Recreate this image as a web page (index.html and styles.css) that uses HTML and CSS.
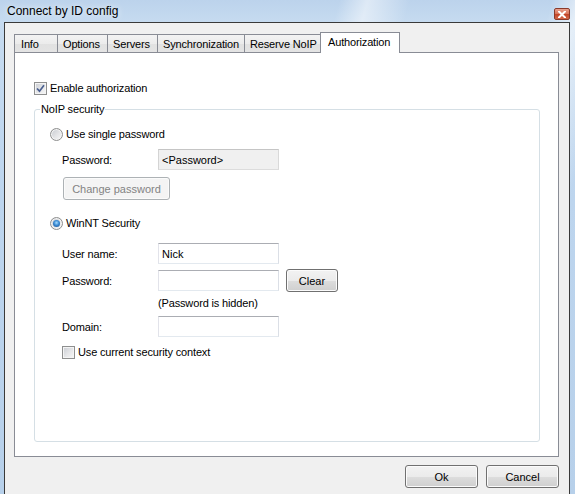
FILE: index.html
```html
<!DOCTYPE html>
<html>
<head>
<meta charset="utf-8">
<title>Connect by ID config</title>
<link rel="stylesheet" href="styles.css">
</head>
<body>
<div class="window">
  <div class="titlebar">
    <span class="title">Connect by ID config</span>
    <span class="close"><svg width="8" height="7" viewBox="0 0 8 7"><path d="M1 0.5 L7 6.5 M7 0.5 L1 6.5" stroke="#fff" stroke-width="2" stroke-linecap="square"/></svg></span>
  </div>
  <div class="client">
    <div class="tabs">
      <div class="tab t-info">Info</div>
      <div class="tab t-options">Options</div>
      <div class="tab t-servers">Servers</div>
      <div class="tab t-sync">Synchronization</div>
      <div class="tab t-reserve">Reserve NoIP</div>
      <div class="tab sel t-auth">Authorization</div>
    </div>
    <div class="panel">
      <div class="row13 enable">
        <span class="cb"><svg width="9" height="9" viewBox="0 0 9 9"><path d="M1 4.5 L3.5 7.2 L8 1.2" fill="none" stroke="#4a5f8f" stroke-width="1.7"/></svg></span>
        <span>Enable authorization</span>
      </div>
      <div class="group">
        <div class="group-title">NoIP security</div>
        <div class="group-body">
          <div class="row13 r1"><span class="radio"></span><span>Use single password</span></div>
          <div class="field pw1"><span class="lbl">Password:</span><input class="edit ro" value="&lt;Password&gt;" readonly></div>
          <div class="btnrow"><button class="btn change" disabled>Change password</button></div>
          <div class="row13 r2"><span class="radio"><span class="dot"></span></span><span>WinNT Security</span></div>
          <div class="field user"><span class="lbl">User name:</span><input class="edit" value="Nick"></div>
          <div class="field pw2"><span class="lbl">Password:</span><input class="edit" type="password" value=""><button class="btn clear">Clear</button></div>
          <div class="hint">(Password is hidden)</div>
          <div class="field domain"><span class="lbl">Domain:</span><input class="edit" value=""></div>
          <div class="row13 ctx"><span class="cb"></span><span>Use current security context</span></div>
        </div>
      </div>
    </div>
    <div class="footer">
      <button class="btn dlg">Ok</button>
      <button class="btn dlg">Cancel</button>
    </div>
  </div>
</div>
</body>
</html>
```

FILE: styles.css
```css
html, body {
  margin: 0;
  padding: 0;
}
body {
  width: 575px;
  height: 494px;
  overflow: hidden;
  font-family: "Liberation Sans", Arial, sans-serif;
  font-size: 11px;
  letter-spacing: -0.15px;
  color: #000;
}
.window {
  box-sizing: border-box;
  height: 494px;
  padding: 0 5px 0 4px;
  display: flex;
  flex-direction: column;
  background:
    linear-gradient(105deg, rgba(255,255,255,0) 48%, rgba(255,255,255,0.5) 52%, rgba(255,255,255,0) 58%, rgba(255,255,255,0) 78%, rgba(255,255,255,0.55) 82%, rgba(255,255,255,0) 88%),
    linear-gradient(to bottom, #bcd3ec 0px, #c6dbf0 22px, #bdd5ee 200px, #b7d0ea 494px);
}
.titlebar {
  height: 22px;
  flex: none;
  display: flex;
  justify-content: space-between;
  align-items: flex-start;
  padding-left: 3px;
}
.title {
  font-size: 12px;
  letter-spacing: 0;
  line-height: 22px;
  text-shadow: 0 0 6px rgba(255,255,255,0.9);
}
.close {
  margin-top: 8px;
  width: 16px;
  height: 12px;
  box-sizing: border-box;
  border: 1px solid #8a3a2a;
  border-radius: 2px;
  background: linear-gradient(to bottom, #e9a28f 0%, #d9775d 45%, #c4472a 55%, #d2684a 100%);
  display: flex;
  align-items: center;
  justify-content: center;
}
.client {
  flex: 1;
  border: 1px solid #3a3a3a;
  border-bottom: none;
  background: #f0f0f0;
  padding: 9px 10px 0 9px;
}
.tabs {
  display: flex;
  align-items: flex-end;
  height: 20px;
}
.tab {
  box-sizing: border-box;
  height: 18px;
  border: 1px solid #898c95;
  border-right: none;
  border-bottom: none;
  padding-left: 5px;
  line-height: 18px;
  white-space: nowrap;
  overflow: hidden;
  background: linear-gradient(to bottom, #f3f3f3 0%, #ececec 50%, #e1e1e1 51%, #e4e4e4 100%);
}
.t-info { width: 43px; padding-left: 6px; }
.t-options { width: 50px; }
.t-servers { width: 50px; }
.t-sync { width: 87px; }
.t-reserve { width: 76px; }
.tab.sel {
  width: 80px;
  height: 21px;
  margin-bottom: -1px;
  position: relative;
  z-index: 1;
  background: #fff;
  border-right: 1px solid #898c95;
  padding-left: 7px;
  line-height: 18px;
}
.panel {
  box-sizing: border-box;
  height: 405px;
  border: 1px solid #898c95;
  background: #fff;
  padding: 29px 18px 0 19px;
}
.row13 {
  display: flex;
  align-items: center;
  height: 13px;
  line-height: 13px;
}
.cb {
  box-sizing: border-box;
  width: 13px;
  height: 13px;
  flex: none;
  margin-right: 3px;
  border: 1px solid #8e8f8f;
  background: linear-gradient(135deg, #c9ccd2 0%, #e6e7e9 55%, #f7f7f7 100%);
  box-shadow: inset 0 0 0 1px #f4f4f4;
  display: flex;
  align-items: center;
  justify-content: center;
}
.radio {
  box-sizing: border-box;
  width: 13px;
  height: 13px;
  flex: none;
  margin-right: 3px;
  border: 1px solid #8e8f8f;
  border-radius: 50%;
  background: linear-gradient(135deg, #c5c9cf 0%, #e4e5e7 55%, #f8f8f8 100%);
  box-shadow: inset 0 0 0 1px #f4f4f4;
  display: flex;
  align-items: center;
  justify-content: center;
}
.dot {
  width: 7px;
  height: 7px;
  border-radius: 50%;
  background: radial-gradient(circle at 50% 40%, #a6dcff 0%, #3a8ad3 45%, #1c4f8e 100%);
}
.group {
  box-sizing: border-box;
  margin-top: 14px;
  height: 333px;
  border: 1px solid #d5dfe5;
  border-radius: 3px;
}
.group-title {
  margin: -7px 0 0 5px;
  padding: 0 1px;
  background: #fff;
  width: max-content;
  line-height: 13px;
}
.group-body {
  padding: 12px 0 0 15px;
}
.field {
  display: flex;
  align-items: center;
  margin-left: 12px;
}
.lbl {
  width: 96px;
  flex: none;
}
.edit {
  box-sizing: border-box;
  width: 121px;
  height: 21px;
  margin: 0;
  padding: 0 3px;
  border: 1px solid;
  border-color: #abadb3 #dbdfe6 #e3e9ef #e2e3ea;
  font: inherit;
  color: #000;
  background: #fff;
  outline: none;
}
.edit.ro {
  background: #f0f0f0;
  border-color: #c5c5c5 #d9d9d9 #dcdcdc #d4d4d4;
}
.btn {
  box-sizing: border-box;
  height: 23px;
  margin: 0;
  padding: 0;
  border: 1px solid #707070;
  border-radius: 3px;
  background: linear-gradient(to bottom, #f2f2f2 0%, #ebebeb 50%, #dddddd 51%, #cfcfcf 100%);
  box-shadow: inset 0 0 0 1px #fbfbfb;
  font: inherit;
  color: #000;
}
.btn:disabled {
  border-color: #adb2b5;
  background: #f4f4f4;
  color: #838383;
}
.r1 { margin-top: 0; }
.pw1 { margin-top: 8px; }
.btnrow { margin-top: 7px; }
.change { width: 107px; margin-left: 13px; }
.r2 { margin-top: 17px; }
.user { margin-top: 13px; }
.pw2 { margin-top: 5px; }
.clear { width: 52px; margin-left: 7px; }
.hint {
  margin: 5px 0 0 108px;
  line-height: 13px;
}
.domain { margin-top: 6px; }
.ctx { margin: 9px 0 0 12px; }
.footer {
  display: flex;
  justify-content: flex-end;
  gap: 8px;
  margin-top: 8px;
}
.btn.dlg { width: 73px; }
```
